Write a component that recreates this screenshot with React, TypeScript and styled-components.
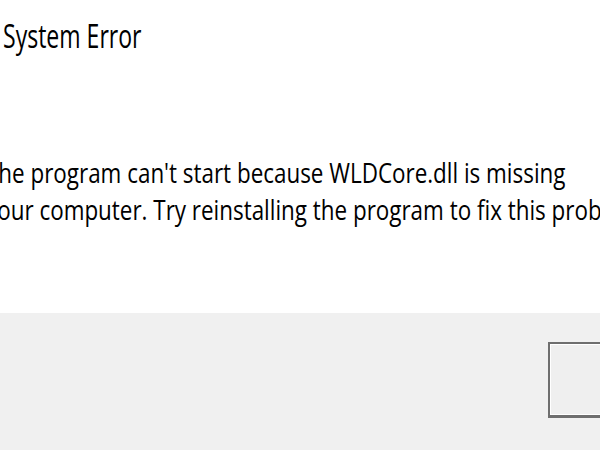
import React from "react";
import styled, { createGlobalStyle } from "styled-components";

const Global = createGlobalStyle`
  html, body { margin: 0; padding: 0; background: #ffffff; }
  body { width: 600px; height: 450px; overflow: hidden; }
`;

const Page = styled.div`
  width: 600px;
  height: 450px;
  overflow: hidden;
  display: flex;
  flex-direction: column;
  font-family: "Open Sans", "Noto Sans", sans-serif;
  color: #000;
`;

const Content = styled.div`
  flex: 0 0 313px;
  background: #ffffff;
  display: flex;
  flex-direction: column;
`;

const Title = styled.div`
  font-size: 32px;
  line-height: 44px;
  margin-top: 14px;
  margin-left: 3px;
  white-space: nowrap;
  transform: scaleX(0.72);
  transform-origin: left center;
`;

const Message = styled.div`
  margin-top: 96px;
  margin-left: -14px;
  font-size: 27px;
  line-height: 37px;
  white-space: nowrap;
  transform: scaleX(0.83);
  transform-origin: left center;
`;

const Line = styled.div``;

const Footer = styled.div`
  flex: 1;
  background: #f0f0f0;
  display: flex;
  align-items: flex-start;
  padding-top: 29px;
  padding-left: 548px;
`;

const Button = styled.button`
  flex: 0 0 auto;
  width: 120px;
  height: 76px;
  box-sizing: border-box;
  background: #efefef;
  border: 2px solid #6e6e6e;
  border-bottom-width: 3px;
  box-shadow: inset 0 0 0 1px #ffffff;
  padding: 0;
`;

export default function App() {
  return (
    <>
      <Global />
      <Page>
        <Content>
          <Title>System Error</Title>
          <Message>
            <Line>The program can't start because WLDCore.dll is missing</Line>
            <Line>your computer. Try reinstalling the program to fix this problem.</Line>
          </Message>
        </Content>
        <Footer>
          <Button type="button" aria-label="OK" />
        </Footer>
      </Page>
    </>
  );
}
